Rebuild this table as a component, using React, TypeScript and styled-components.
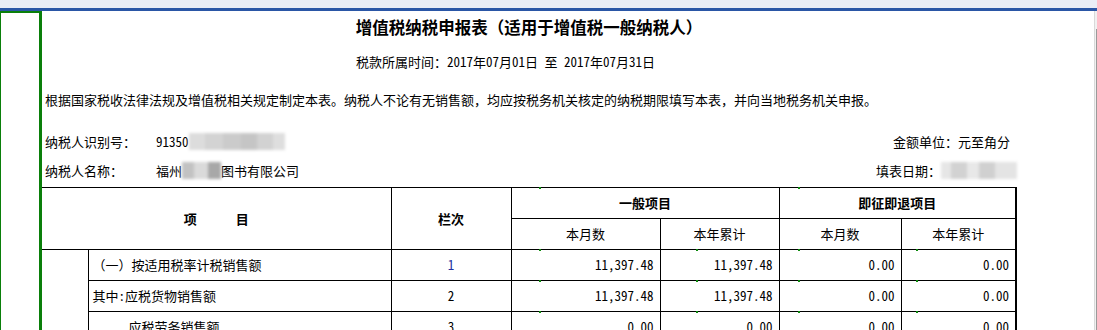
import React from 'react';
import styled, { createGlobalStyle } from 'styled-components';

const GlobalStyle = createGlobalStyle`
  html, body { margin: 0; padding: 0; height: 330px; overflow: hidden; background: #fff; }
  body {
    font-family: "Noto Sans Mono CJK SC", "Noto Sans CJK SC", sans-serif;
    font-size: 13px;
    color: #000;
  }
  #root { height: 330px; }
`;

const GREEN = '#0a7f0a';

const Page = styled.div`
  display: flex;
  flex-direction: column;
  width: 1097px;
  height: 330px;
  overflow: hidden;
`;

const TopBand = styled.div`
  flex: none;
  height: 8px;
  background: #e9edf6;
  border-bottom: 3px solid #2a56a6;
`;

const Main = styled.div`
  display: flex;
  flex: 1;
  min-height: 0;
`;

const SidePanel = styled.div`
  flex: none;
  width: 42px;
  box-sizing: border-box;
  border-left: 1px solid ${GREEN};
  border-top: 2px solid ${GREEN};
  border-right: 3px solid ${GREEN};
`;

const Sheet = styled.div`
  flex: none;
  width: 974px;
  display: flex;
  flex-direction: column;
`;

const Filler = styled.div`
  flex: 1;
`;

const ScrollBar = styled.div`
  flex: none;
  width: 3px;
  display: flex;
  flex-direction: column;
  background: #f1f1f1;
  border-left: 1px solid #d9d9d9;
  box-sizing: border-box;
`;

const ScrollGap = styled.div`
  height: 18px;
  flex: none;
`;

const ScrollThumb = styled.div`
  flex: 1;
  border-right: 1px solid #9a9a9a;
`;

const Title = styled.div`
  height: 32px;
  line-height: 32px;
  text-align: center;
  font-size: 16.5px;
  font-weight: bold;
  font-family: "Noto Sans CJK SC", sans-serif;
`;

const Period = styled.div`
  height: 37px;
  line-height: 37px;
  text-align: center;
  padding-right: 47px;
  white-space: pre;
`;

const Notice = styled.div`
  height: 39px;
  line-height: 39px;
  padding-left: 3px;
  white-space: nowrap;
`;

const InfoBlock = styled.div`
  padding-top: 8px;
`;

const InfoRow = styled.div`
  display: flex;
  justify-content: space-between;
  align-items: center;
  height: 29px;
  padding: 0 6px 0 3px;
`;

const InfoLeft = styled.div`
  display: flex;
  align-items: center;
`;

const InfoRight = styled.div<{ $bleed?: boolean }>`
  display: flex;
  align-items: center;
  margin-right: ${(p) => (p.$bleed ? '-7px' : '0')};
`;

const Label = styled.span`
  display: inline-block;
  width: 111px;
`;

const Blur = styled.span<{ $w: number; $bg: string }>`
  display: inline-block;
  width: ${(p) => p.$w}px;
  height: 17px;
  background: ${(p) => p.$bg};
  filter: blur(1.8px);
`;

const Table = styled.table`
  margin-top: 2px;
  width: 974px;
  border-collapse: collapse;
  table-layout: fixed;
  border-left: hidden;
  border-right: 2px solid #000;
`;

const Row = styled.tr`
  height: 31px;
`;

const Head = styled.th<{ $weight?: string }>`
  position: relative;
  border: 1px solid #000;
  padding: 0 0 1px;
  font-weight: ${(p) => p.$weight || 'bold'};
  text-align: center;
  white-space: pre;
`;

const Cell = styled.td<{ $align?: string; $indent?: number; $color?: string }>`
  position: relative;
  border: 1px solid #000;
  padding: 0 6px 2px ${(p) => (p.$indent ?? 4)}px;
  text-align: ${(p) => p.$align || 'left'};
  color: ${(p) => p.$color || '#000'};
  white-space: nowrap;
`;

const Marker = styled.span<{ $x: number }>`
  position: absolute;
  top: -1px;
  left: ${(p) => p.$x}px;
  width: 2px;
  height: 2px;
  background: #0c8a0c;
`;

type Line = {
  name: string;
  indent: number;
  no: string;
  noColor?: string;
  values: string[];
};

const lines: Line[] = [
  { name: '（一）按适用税率计税销售额', indent: 4, no: '1', noColor: '#1f2fa0', values: ['11,397.48', '11,397.48', '0.00', '0.00'] },
  { name: '其中:应税货物销售额', indent: 4, no: '2', values: ['11,397.48', '11,397.48', '0.00', '0.00'] },
  { name: '应税劳务销售额', indent: 40, no: '3', values: ['0.00', '0.00', '0.00', '0.00'] },
  { name: '纳税检查调整的销售额', indent: 40, no: '4', values: ['0.00', '0.00', '0.00', '0.00'] },
];

const markerOffsets = [27, 35, 18, 14];

const widths = [46, 303, 120, 149, 119, 122, 115];

export default function App() {
  return (
    <>
      <GlobalStyle />
      <Page>
        <TopBand />
        <Main>
          <SidePanel />
          <Sheet>
            <Title>增值税纳税申报表（适用于增值税一般纳税人）</Title>
            <Period>税款所属时间：2017年07月01日 至 2017年07月31日</Period>
            <Notice>
              根据国家税收法律法规及增值税相关规定制定本表。纳税人不论有无销售额，均应按税务机关核定的纳税期限填写本表，并向当地税务机关申报。
            </Notice>
            <InfoBlock>
              <InfoRow>
                <InfoLeft>
                  <Label>纳税人识别号：</Label>
                  <span>91350</span>
                  <Blur
                    $w={96}
                    $bg="linear-gradient(90deg, #dcdcdc 0 16px, #d3d3d3 16px 34px, #cbcbcb 34px 52px, #c5c5c5 52px 68px, #d2d2d2 68px 84px, #dedede 84px)"
                  />
                </InfoLeft>
                <InfoRight>金额单位：元至角分</InfoRight>
              </InfoRow>
              <InfoRow>
                <InfoLeft>
                  <Label>纳税人名称：</Label>
                  <span>福州</span>
                  <Blur
                    $w={39}
                    $bg="linear-gradient(90deg, #c2c2c2 0 12px, #dadada 12px 26px, #a8a8a8 26px)"
                  />
                  <span>图书有限公司</span>
                </InfoLeft>
                <InfoRight $bleed>
                  <span>填表日期：</span>
                  <Blur
                    $w={76}
                    $bg="linear-gradient(90deg, #e6e6e6 0 10px, #d2d2d2 10px 26px, #e8e8e8 26px 38px, #d0d0d0 38px 54px, #e4e4e4 54px)"
                  />
                </InfoRight>
              </InfoRow>
            </InfoBlock>
            <Table>
              <colgroup>
                {widths.map((w, i) => (
                  <col key={i} style={{ width: w }} />
                ))}
              </colgroup>
              <thead>
                <Row>
                  <Head colSpan={2} rowSpan={2}>项　　　目</Head>
                  <Head rowSpan={2}>栏次</Head>
                  <Head colSpan={2}>
                    <Marker $x={27} />
                    一般项目
                  </Head>
                  <Head colSpan={2}>
                    <Marker $x={18} />
                    即征即退项目
                  </Head>
                </Row>
                <Row>
                  <Head $weight="normal">本月数</Head>
                  <Head $weight="normal">本年累计</Head>
                  <Head $weight="normal">本月数</Head>
                  <Head $weight="normal">本年累计</Head>
                </Row>
              </thead>
              <tbody>
                {lines.map((l, i) => (
                  <Row key={l.no}>
                    {i === 0 && <Cell rowSpan={lines.length} />}
                    <Cell $indent={l.indent}>{l.name}</Cell>
                    <Cell $align="center" $indent={6} $color={l.noColor}>
                      {l.no}
                    </Cell>
                    {l.values.map((v, j) => (
                      <Cell key={j} $align="right">
                        <Marker $x={markerOffsets[j]} />
                        {v}
                      </Cell>
                    ))}
                  </Row>
                ))}
              </tbody>
            </Table>
          </Sheet>
          <Filler />
          <ScrollBar>
            <ScrollGap />
            <ScrollThumb />
          </ScrollBar>
        </Main>
      </Page>
    </>
  );
}
